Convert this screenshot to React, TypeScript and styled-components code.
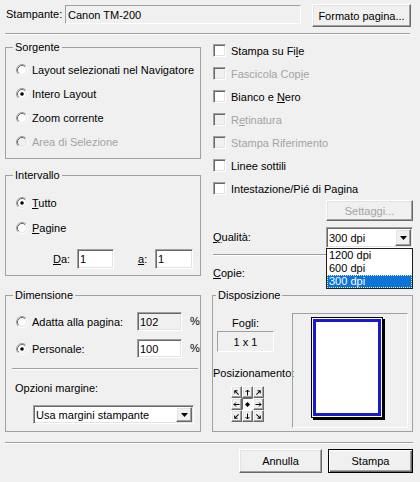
import React from "react";
import styled, { createGlobalStyle, css } from "styled-components";

const Global = createGlobalStyle`
  html, body { margin: 0; padding: 0; background: #f0f0f0; }
  body { font-family: "Liberation Sans", Arial, sans-serif; font-size: 11px; color: #000; }
  * { box-sizing: border-box; }
`;

const raised = css`
  background: #f0f0f0;
  border: 1px solid;
  border-color: #fff #696969 #696969 #fff;
  box-shadow: inset -1px -1px #a0a0a0, inset 1px 1px #e3e3e3;
`;

const sunken = css`
  border: 1px solid;
  border-color: #a0a0a0 #fff #fff #a0a0a0;
  box-shadow: inset 1px 1px #696969, inset -1px -1px #e3e3e3;
`;

const Dialog = styled.div`
  width: 420px;
  height: 482px;
  padding-top: 4px;
  background: #f0f0f0;
  overflow: hidden;
`;

const TopRow = styled.div`
  display: flex;
  align-items: flex-start;
  height: 23px;
  padding-left: 6px;
`;

const Label = styled.span<{ $w?: number; $ml?: number; $disabled?: boolean }>`
  display: inline-block;
  flex: none;
  white-space: nowrap;
  line-height: 13px;
  ${(p) => (p.$w !== undefined ? `width: ${p.$w}px;` : "")}
  margin-left: ${(p) => p.$ml ?? 0}px;
  color: ${(p) => (p.$disabled ? "#a3a3a3" : "#000")};
`;

const TopLabel = styled(Label)`
  line-height: 19px;
  margin-top: 1px;
`;

const Edit = styled.div<{ $w: number; $h: number; $flat?: boolean; $disabled?: boolean; $center?: boolean; $ml?: number }>`
  flex: none;
  width: ${(p) => p.$w}px;
  height: ${(p) => p.$h}px;
  margin-left: ${(p) => p.$ml ?? 0}px;
  display: flex;
  align-items: center;
  justify-content: ${(p) => (p.$center ? "center" : "flex-start")};
  padding: 0 2px;
  white-space: nowrap;
  background: ${(p) => (p.$flat || p.$disabled ? "#f0f0f0" : "#fff")};
  ${(p) =>
    p.$flat
      ? css`
          border: 1px solid;
          border-color: #a0a0a0 #fff #fff #a0a0a0;
        `
      : sunken}
`;

const TopEdit = styled(Edit)`
  margin-top: 1px;
`;

const Button = styled.button<{ $w: number; $h: number; $ml?: number; $default?: boolean; $off?: boolean }>`
  ${raised}
  flex: none;
  width: ${(p) => p.$w}px;
  height: ${(p) => p.$h}px;
  margin: 0 0 0 ${(p) => p.$ml ?? 0}px;
  padding: 0;
  font: inherit;
  font-size: 11px;
  color: ${(p) => (p.$off ? "#a3a3a3" : "#000")};
  ${(p) =>
    p.$default &&
    css`
      border: 1px solid #000;
      box-shadow: inset 1px 1px #fff, inset -1px -1px #696969, inset -2px -2px #a0a0a0;
    `}
`;

const HLine = styled.div<{ $mt: number; $ml: number; $w: number }>`
  flex: none;
  width: ${(p) => p.$w}px;
  height: 2px;
  margin: ${(p) => p.$mt}px 0 0 ${(p) => p.$ml}px;
  border-top: 1px solid #a0a0a0;
  border-bottom: 1px solid #fff;
`;

const Main = styled.div`
  display: grid;
  grid-template-columns: 196px 201px;
  grid-template-rows: 237px 143px;
  column-gap: 11px;
  row-gap: 13px;
  margin-top: 4px;
  padding-left: 5px;
`;

const LeftStack = styled.div`
  display: flex;
  flex-direction: column;
  gap: 10px;
  padding-top: 2px;
  & > * { flex-shrink: 0; }
`;

const Group = styled.fieldset<{ $h: number }>`
  margin: 0;
  padding: 0;
  min-width: 0;
  height: ${(p) => p.$h}px;
  border: 1px solid #a0a0a0;
`;

const Legend = styled.legend<{ $indent: number }>`
  margin-left: ${(p) => p.$indent}px;
  padding: 0 2px;
  line-height: 13px;
  font-size: 11px;
`;

const GroupBody = styled.div<{ $pt: number; $pl: number }>`
  display: flex;
  flex-direction: column;
  padding: ${(p) => p.$pt}px 0 0 ${(p) => p.$pl}px;
`;

const RadioRow = styled.div<{ $h: number; $disabled?: boolean }>`
  display: flex;
  align-items: center;
  gap: 4px;
  height: ${(p) => p.$h}px;
  flex-shrink: 0;
  white-space: nowrap;
  color: ${(p) => (p.$disabled ? "#a3a3a3" : "#000")};
`;

const RadioSvg = styled.svg`
  display: block;
  flex: none;
`;

const Radio = ({ checked, disabled }: { checked?: boolean; disabled?: boolean }) => (
  <RadioSvg width="12" height="12" viewBox="0 0 12 12">
    <circle cx="6" cy="6" r="5" fill={disabled ? "#f0f0f0" : "#fff"} />
    <path d="M2.11 9.89 A5.5 5.5 0 0 1 9.89 2.11" fill="none" stroke="#a0a0a0" />
    <path d="M2.82 9.18 A4.5 4.5 0 0 1 9.18 2.82" fill="none" stroke="#696969" />
    <path d="M9.89 2.11 A5.5 5.5 0 0 1 2.11 9.89" fill="none" stroke="#ffffff" />
    <path d="M9.18 2.82 A4.5 4.5 0 0 1 2.82 9.18" fill="none" stroke="#e3e3e3" />
    {checked && <circle cx="6" cy="6" r="1.8" fill="#000" />}
  </RadioSvg>
);

const RangeRow = styled.div`
  display: flex;
  align-items: center;
  height: 20px;
  margin-top: 9px;
  padding-left: 47px;
`;

const ScaleGrid = styled.div`
  display: grid;
  grid-template-columns: 113px 45px auto;
  grid-auto-rows: 19px;
  column-gap: 8px;
  row-gap: 8px;
  align-items: center;
  padding: 10px 0 0 10px;
`;

const MarginLabel = styled(Label)`
  margin: 12px 0 0 9px;
`;

const Combo = styled.div<{ $w: number; $h: number; $ml?: number; $mt?: number }>`
  position: relative;
  flex: none;
  display: flex;
  width: ${(p) => p.$w}px;
  height: ${(p) => p.$h}px;
  margin: ${(p) => p.$mt ?? 0}px 0 0 ${(p) => p.$ml ?? 0}px;
  padding: 1px;
  background: #fff;
  ${sunken}
`;

const ComboText = styled.span`
  flex: 1;
  display: flex;
  align-items: center;
  padding-left: 1px;
  white-space: nowrap;
`;

const ComboButton = styled.span`
  ${raised}
  width: 16px;
  flex: none;
  display: flex;
  align-items: center;
  justify-content: center;
`;

const Caret = () => (
  <svg width="7" height="4" viewBox="0 0 7 4">
    <path d="M0 0H7L3.5 4Z" fill="#000" />
  </svg>
);

const DropList = styled.div`
  position: absolute;
  top: calc(100% + 1px);
  left: -1px;
  width: 87px;
  border: 1px solid #1e1e1e;
  background: #fff;
  z-index: 10;
`;

const DropItem = styled.div<{ $selected?: boolean }>`
  height: 13px;
  line-height: 11px;
  padding-left: 1px;
  white-space: nowrap;
  background: ${(p) => (p.$selected ? "#0a74da" : "#fff")};
  color: ${(p) => (p.$selected ? "#fff" : "#000")};
  border: 1px ${(p) => (p.$selected ? "dotted #f7e9a0" : "solid transparent")};
`;

const Options = styled.div`
  display: flex;
  flex-direction: column;
  & > * { flex-shrink: 0; }
`;

const CheckRow = styled.div<{ $disabled?: boolean }>`
  display: flex;
  align-items: center;
  gap: 5px;
  height: 23px;
  padding-left: 1px;
  white-space: nowrap;
  color: ${(p) => (p.$disabled ? "#a3a3a3" : "#000")};
`;

const CheckBox = styled.span<{ $disabled?: boolean }>`
  flex: none;
  width: 13px;
  height: 13px;
  ${sunken}
  background: ${(p) => (p.$disabled ? "#f0f0f0" : "#fff")};
`;

const QualityRow = styled.div`
  display: flex;
  align-items: center;
  height: 21px;
  margin-top: 6px;
  padding-left: 1px;
`;

const CopieLabel = styled(Label)`
  margin: 11px 0 0 1px;
`;

const Layout = styled.div`
  display: flex;
  align-items: flex-start;
`;

const SheetColumn = styled.div`
  width: 65px;
  flex: none;
  display: flex;
  flex-direction: column;
  align-items: center;
`;

const SheetTitle = styled(Label)`
  margin-top: 15px;
`;

const SheetCount = styled(Edit)`
  margin-top: 1px;
`;

const PosLabel = styled(Label)`
  align-self: flex-start;
  margin-top: 15px;
`;

const Pad = styled.div`
  align-self: flex-start;
  display: grid;
  grid-template-columns: repeat(3, 11px);
  grid-template-rows: repeat(3, 12px);
  margin: 6px 0 0 18px;
`;

const PadCell = styled.span<{ $pressed?: boolean }>`
  display: flex;
  align-items: center;
  justify-content: center;
  ${(p) =>
    p.$pressed
      ? css`
          background: #fbfbfb;
          border: 1px solid;
          border-color: #696969 #fff #fff #696969;
        `
      : raised}
`;

const Arrow = ({ deg }: { deg: number }) => (
  <svg width="7" height="7" viewBox="0 0 7 7" style={{ transform: `rotate(${deg}deg)` }}>
    <path d="M3.5 6.5V1 M1.5 3 L3.5 1 L5.5 3" fill="none" stroke="#000" strokeWidth="1" />
  </svg>
);

const Dot = () => (
  <svg width="5" height="5" viewBox="0 0 5 5">
    <path d="M2.5 0L5 2.5L2.5 5L0 2.5Z" fill="#000" />
  </svg>
);

const Preview = styled.div`
  flex: none;
  width: 116px;
  height: 115px;
  margin: 11px 0 0 14px;
  padding: 3px 0 0 18px;
  border: 1px solid;
  border-color: #a0a0a0 #fff #fff #a0a0a0;
`;

const Sheet = styled.div`
  width: 72px;
  height: 101px;
  padding: 1px;
  background: #fff;
  border: 1px solid #000;
  box-shadow: 2px 2px 0 #000;
`;

const Printable = styled.div`
  width: 100%;
  height: 100%;
  border: 3px solid #1a1acc;
  background: #fff;
`;

const ButtonRow = styled.div`
  display: flex;
  justify-content: flex-end;
  gap: 6px;
  margin-top: 5px;
  padding-right: 7px;
`;

const U = styled.u`
  text-decoration: underline;
  text-underline-offset: 1px;
`;

const checks: { label: React.ReactNode; disabled?: boolean }[] = [
  { label: <>Stampa su Fi<U>l</U>e</> },
  { label: <>Fascicola Cop<U>i</U>e</>, disabled: true },
  { label: <>Bianco e <U>N</U>ero</> },
  { label: <>R<U>e</U>tinatura</>, disabled: true },
  { label: <>Stampa Riferimento</>, disabled: true },
  { label: <>Linee sottili</> },
  { label: <>Intestazione/Pié di Pagina</> },
];

const padCells = [
  { deg: -45 },
  { deg: 0 },
  { deg: 45 },
  { deg: -90 },
  { center: true, deg: 0 },
  { deg: 90 },
  { deg: -135 },
  { deg: 180 },
  { deg: 135 },
];

export default function App() {
  return (
    <>
      <Global />
      <Dialog>
        <TopRow>
          <TopLabel $w={59}>Stampante:</TopLabel>
          <TopEdit $flat $w={236} $h={19}>Canon TM-200</TopEdit>
          <Button $w={99} $h={23} $ml={11}>Formato pagina...</Button>
        </TopRow>
        <HLine $mt={6} $ml={5} $w={405} />
        <Main>
          <LeftStack>
            <Group $h={118}>
              <Legend $indent={7}>Sorgente</Legend>
              <GroupBody $pt={4} $pl={10}>
                <RadioRow $h={24}>
                  <Radio />
                  Layout selezionati nel Navigatore
                </RadioRow>
                <RadioRow $h={24}>
                  <Radio checked />
                  Intero Layout
                </RadioRow>
                <RadioRow $h={24}>
                  <Radio />
                  Zoom corrente
                </RadioRow>
                <RadioRow $h={24} $disabled>
                  <Radio disabled />
                  Area di Selezione
                </RadioRow>
              </GroupBody>
            </Group>
            <Group $h={107}>
              <Legend $indent={7}>Intervallo</Legend>
              <GroupBody $pt={8} $pl={10}>
                <RadioRow $h={25}>
                  <Radio checked />
                  <span>
                    <U>T</U>utto
                  </span>
                </RadioRow>
                <RadioRow $h={25}>
                  <Radio />
                  <span>
                    <U>P</U>agine
                  </span>
                </RadioRow>
              </GroupBody>
              <RangeRow>
                <Label $w={24}>
                  <U>D</U>a:
                </Label>
                <Edit $w={37} $h={20}>1</Edit>
                <Label $w={17} $ml={24}>
                  <U>a</U>:
                </Label>
                <Edit $w={38} $h={20}>1</Edit>
              </RangeRow>
            </Group>
          </LeftStack>

          <Options>
            {checks.map((c, i) => (
              <CheckRow key={i} $disabled={c.disabled}>
                <CheckBox $disabled={c.disabled} />
                <span>{c.label}</span>
              </CheckRow>
            ))}
            <Button $w={87} $h={21} $ml={114} $off>
              Settaggi...
            </Button>
            <QualityRow>
              <Label $w={113}>
                <U>Q</U>ualità:
              </Label>
              <Combo $w={87} $h={21}>
                <ComboText>300 dpi</ComboText>
                <ComboButton>
                  <Caret />
                </ComboButton>
                <DropList>
                  <DropItem>1200 dpi</DropItem>
                  <DropItem>600 dpi</DropItem>
                  <DropItem $selected>300 dpi</DropItem>
                </DropList>
              </Combo>
            </QualityRow>
            <HLine $mt={6} $ml={1} $w={200} />
            <CopieLabel>
              <U>C</U>opie:
            </CopieLabel>
          </Options>

          <Group $h={143}>
            <Legend $indent={7}>Dimensione</Legend>
            <ScaleGrid>
              <RadioRow $h={19}>
                <Radio />
                Adatta alla pagina:
              </RadioRow>
              <Edit $w={45} $h={19} $disabled>102</Edit>
              <Label>%</Label>
              <RadioRow $h={19}>
                <Radio checked />
                Personale:
              </RadioRow>
              <Edit $w={45} $h={19}>100</Edit>
              <Label>%</Label>
            </ScaleGrid>
            <HLine $mt={10} $ml={6} $w={186} />
            <MarginLabel>Opzioni margine:</MarginLabel>
            <Combo $w={161} $h={19} $ml={27} $mt={10}>
              <ComboText>Usa margini stampante</ComboText>
              <ComboButton>
                <Caret />
              </ComboButton>
            </Combo>
          </Group>

          <Group $h={143}>
            <Legend $indent={3}>Disposizione</Legend>
            <Layout>
              <SheetColumn>
                <SheetTitle>Fogli:</SheetTitle>
                <SheetCount $flat $center $w={57} $h={21}>
                  1 x 1
                </SheetCount>
                <PosLabel>Posizionamento:</PosLabel>
                <Pad>
                  {padCells.map((c, i) => (
                    <PadCell key={i} $pressed={c.center}>
                      {c.center ? <Dot /> : <Arrow deg={c.deg} />}
                    </PadCell>
                  ))}
                </Pad>
              </SheetColumn>
              <Preview>
                <Sheet>
                  <Printable />
                </Sheet>
              </Preview>
            </Layout>
          </Group>
        </Main>
        <HLine $mt={10} $ml={5} $w={408} />
        <ButtonRow>
          <Button $w={83} $h={24}>Annulla</Button>
          <Button $w={85} $h={24} $default>
            Stampa
          </Button>
        </ButtonRow>
      </Dialog>
    </>
  );
}
